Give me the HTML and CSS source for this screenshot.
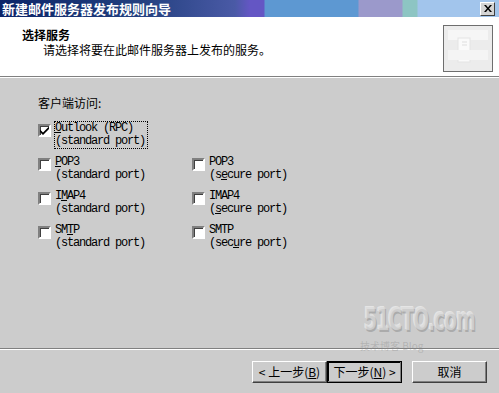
FILE: index.html
```html
<!DOCTYPE html>
<html lang="zh-CN">
<head>
    <meta charset="UTF-8">
    <title>新建邮件服务器发布规则向导</title>
    <link rel="stylesheet" href="styles.css">
</head>
<body>
<div class="wizard">
    <div class="titlebar">
        <span class="title">新建邮件服务器发布规则向导</span>
        <span class="close-btn">
            <svg width="8" height="7" viewBox="0 0 8 7"><path d="M0 0h2l2 2.5L6 0h2L5 3.5 8 7H6L4 4.5 2 7H0l3-3.5z" fill="#000"/></svg>
        </span>
    </div>

    <div class="header">
        <div class="header-text">
            <h1>选择服务</h1>
            <p>请选择将要在此邮件服务器上发布的服务。</p>
        </div>
        <div class="header-icon">
            <svg width="48" height="45" viewBox="0 0 48 45">
                <rect x="0" y="0" width="48" height="45" fill="#ececec"/>
                <rect x="4" y="4" width="40" height="10" fill="#f6f6f6"/>
                <rect x="14" y="12" width="12" height="24" fill="#fafafa" stroke="#e4e4e4"/>
                <rect x="4" y="24" width="40" height="10" fill="#f4f4f4"/>
                <line x1="18" y1="16" x2="23" y2="16" stroke="#dedede"/>
                <line x1="18" y1="19" x2="23" y2="19" stroke="#dedede"/>
            </svg>
        </div>
    </div>

    <div class="content">
        <p class="group-label">客户端访问:</p>
        <div class="options">
            <div class="option">
                <span class="box">
                    <svg width="9" height="9" viewBox="0 0 9 9"><path d="M0 3.5l3 3 6-6v2.5L3 9 0 6z" fill="#000"/></svg>
                </span>
                <span class="text focused"><u>O</u>utlook (RPC)<br>(standard port)</span>
            </div>
            <div class="option empty"></div>

            <div class="option">
                <span class="box"></span>
                <span class="text"><u>P</u>OP3<br>(standard port)</span>
            </div>
            <div class="option">
                <span class="box"></span>
                <span class="text">POP3<br>(s<u>e</u>cure port)</span>
            </div>

            <div class="option">
                <span class="box"></span>
                <span class="text">I<u>M</u>AP4<br>(standard port)</span>
            </div>
            <div class="option">
                <span class="box"></span>
                <span class="text">IMAP4<br>(<u>s</u>ecure port)</span>
            </div>

            <div class="option">
                <span class="box"></span>
                <span class="text">SM<u>T</u>P<br>(standard port)</span>
            </div>
            <div class="option">
                <span class="box"></span>
                <span class="text">SMTP<br>(sec<u>u</u>re port)</span>
            </div>
        </div>
    </div>

    <div class="footer">
        <button class="btn">&lt; 上一步(<u>B</u>)</button>
        <button class="btn default">下一步(<u>N</u>) &gt;</button>
        <button class="btn cancel">取消</button>
    </div>

    <div class="watermark">
        <span class="wm-site">51CTO.com</span>
        <span class="wm-blog">技术博客 Blog</span>
    </div>
</div>
</body>
</html>
```

FILE: styles.css
```css
body {
    margin: 0;
    padding: 0;
    background-color: #cccccc;
    font-family: "Noto Sans CJK SC", "Noto Sans", sans-serif;
    font-size: 12px;
    color: #000;
}

.wizard {
    position: relative;
    width: 499px;
    height: 393px;
    overflow: hidden;
    background-color: #cccccc;
}

/* title bar with the odd colour blocks on the right */
.titlebar {
    height: 17px;
    display: flex;
    align-items: center;
    justify-content: space-between;
    padding: 0 4px 0 2px;
    background: linear-gradient(to right,
        #0c2468 0px, #23407f 140px, #4a5aa6 235px,
        #6456c4 250px, #6456c4 264px,
        #5d98d2 265px, #5d98d2 358px,
        #9b99cb 359px, #9b99cb 402px,
        #8dc5c3 403px, #8dc5c3 417px,
        #a2c5ec 418px);
}

.title {
    color: #fff;
    font-weight: bold;
    font-size: 13px;
    line-height: 17px;
    white-space: nowrap;
}

.close-btn {
    width: 13px;
    height: 12px;
    display: flex;
    align-items: center;
    justify-content: center;
    background-color: #d4d4d4;
    border: 1px solid;
    border-color: #fff #404040 #404040 #fff;
    margin-left: auto;
}

.header {
    height: 59px;
    background-color: #fff;
    display: flex;
    justify-content: space-between;
    border-bottom: 1px solid #808080;
    box-shadow: 0 1px 0 #fff;
}

.header-text {
    padding: 11px 0 0 22px;
}

.header-text h1 {
    margin: 0;
    font-size: 12px;
    font-weight: bold;
    line-height: 14px;
}

.header-text p {
    margin: 1px 0 0 21px;
    line-height: 14px;
}

.header-icon {
    margin: 8px 6px 0 0;
    width: 48px;
    height: 45px;
    border: 1px solid #6e6e6e;
}

.header-icon svg {
    display: block;
}

.content {
    height: 252px;
    padding: 19px 0 0 38px;
    border-bottom: 1px solid #808080;
}

.group-label {
    margin: 0 0 11px;
    line-height: 14px;
}

.options {
    display: grid;
    grid-template-columns: 154px 154px;
    row-gap: 6px;
}

.option {
    display: flex;
    align-items: flex-start;
    height: 28px;
}

.box {
    width: 9px;
    height: 9px;
    margin-top: 3px;
    margin-right: 3px;
    background-color: #fff;
    border: 2px solid;
    border-color: #808080 #fff #fff #808080;
    box-shadow: inset 1px 1px 0 #404040;
    display: flex;
    align-items: center;
    justify-content: center;
}

.box svg {
    display: block;
}

.text {
    font-family: "Liberation Mono", "DejaVu Sans Mono", monospace;
    font-size: 12px;
    letter-spacing: -1.2px;
    line-height: 13px;
    border: 1px dotted transparent;
    padding-right: 2px;
    white-space: nowrap;
}

.text.focused {
    border-color: #000;
}

.text u {
    text-underline-offset: 1px;
}

.footer {
    border-top: 1px solid #fff;
    display: flex;
    padding: 11px 0 0 252px;
}

.btn {
    width: 75px;
    height: 22px;
    padding: 0;
    margin: 0;
    font-family: "Noto Sans CJK SC", sans-serif;
    font-size: 12px;
    line-height: 16px;
    background-color: #cccccc;
    color: #000;
    border: 1px solid;
    border-color: #fff #404040 #404040 #fff;
    box-shadow: inset -1px -1px 0 #808080;
}

.btn.default {
    outline: 1px solid #000;
    outline-offset: -1px;
    box-shadow: inset -1px -1px 0 #808080, inset 1px 1px 0 #000;
}

.btn.cancel {
    margin-left: 10px;
}

/* site watermark burnt into the screenshot */
.watermark {
    position: absolute;
    left: 364px;
    top: 300px;
    width: 124px;
    pointer-events: none;
}

.wm-site {
    display: block;
    font-family: "DejaVu Sans Condensed", "DejaVu Sans", sans-serif;
    font-weight: bold;
    font-size: 21px;
    line-height: 26px;
    letter-spacing: -1px;
    transform: scaleY(1.5);
    transform-origin: top left;
    color: rgba(218, 218, 218, 0.7);
    text-shadow: 1px 1px 0 rgba(150, 150, 150, 0.6), -1px -1px 0 rgba(255, 255, 255, 0.5);
    white-space: nowrap;
}

.wm-blog {
    display: block;
    margin: 14px 0 0 -4px;
    font-size: 10px;
    line-height: 12px;
    color: rgba(140, 140, 140, 0.4);
    white-space: nowrap;
}
```
